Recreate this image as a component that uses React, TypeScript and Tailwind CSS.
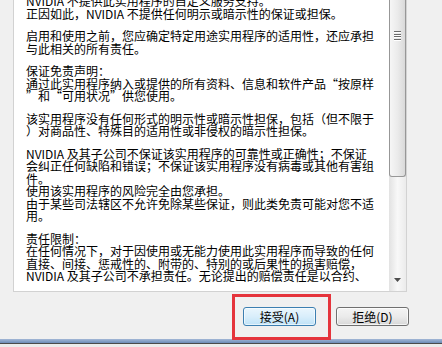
const paragraphs: string[][] = [
  [
    "NVIDIA 不提供此实用程序的自定义服务支持。",
    "正因如此，NVIDIA 不提供任何明示或暗示性的保证或担保。",
  ],
  [
    "启用和使用之前，您应确定特定用途实用程序的适用性，还应承担",
    "与此相关的所有责任。",
  ],
  [
    "保证免责声明：",
    "通过此实用程序纳入或提供的所有资料、信息和软件产品“按原样",
    "”和“可用状况”供您使用。",
  ],
  [
    "该实用程序没有任何形式的明示性或暗示性担保，包括（但不限于",
    "）对商品性、特殊目的适用性或非侵权的暗示性担保。",
  ],
  [
    "NVIDIA 及其子公司不保证该实用程序的可靠性或正确性；不保证",
    "会纠正任何缺陷和错误；不保证该实用程序没有病毒或其他有害组",
    "件。",
    "使用该实用程序的风险完全由您承担。",
    "由于某些司法辖区不允许免除某些保证，则此类免责可能对您不适",
    "用。",
  ],
  [
    "责任限制：",
    "在任何情况下，对于因使用或无能力使用此实用程序而导致的任何",
    "直接、间接、惩戒性的、附带的、特别的或后果性的损害赔偿，",
    "NVIDIA 及其子公司不承担责任。无论提出的赔偿责任是以合约、",
  ],
];

function Scrollbar() {
  return (
    <div className="flex w-[17px] flex-col bg-gradient-to-r from-[#e2e2e2] via-[#f8f8f8] to-[#ebebeb]">
      {/* thumb, scrolled so its top is out of view */}
      <div className="flex h-[177px] flex-col items-center gap-[0.5px] rounded-b-[3px] border-x border-b border-[#979797] bg-gradient-to-r from-[#f6f6f6] via-[#ebebeb] to-[#d9d9d9] pt-[31px]">
        {[0, 1, 2, 3].map((i) => (
          <div key={i} className="h-[2px] w-[7px] border-t border-[#6b6b6b] bg-white" />
        ))}
      </div>
      <div className="flex-1" />
      <div className="flex h-[17px] justify-center pt-[4px]">
        <svg width="7" height="4" viewBox="0 0 7 4">
          <path d="M0 0h7L3.5 4z" fill="#4d4d4d" />
        </svg>
      </div>
    </div>
  );
}

export default function App() {
  return (
    <div className="relative flex h-[347px] w-[442px] flex-col overflow-hidden bg-[#f0f0f0] font-['Noto_Sans_CJK_SC',sans-serif] text-black">
      <div className="ml-[13px] flex h-[292px] w-[394px] border-x border-b border-[#d2d2d2] bg-white">
        <div className="flex-1 overflow-hidden pl-[12px]">
          <div className="-mt-[5px] flex flex-col gap-[10px] text-[12px] leading-[12.5px]">
            {paragraphs.map((p, i) => (
              <p key={i}>
                {p.map((line, j) => (
                  <span key={j} className="block whitespace-nowrap">
                    {line}
                  </span>
                ))}
              </p>
            ))}
          </div>
        </div>
        <Scrollbar />
      </div>

      <div className="mt-[15px] flex justify-end gap-[20px] pr-[33px]">
        <button className="flex h-[19px] w-[73px] items-center justify-center rounded-[3px] border border-[#3c7fb1] bg-gradient-to-b from-[#eaf6fd] via-[#d9eefb] to-[#bfe2f7] text-[12px] leading-none shadow-[inset_0_0_0_1px_rgba(255,255,255,0.6)]">
          接受(A)
        </button>
        <button className="flex h-[19px] w-[73px] items-center justify-center rounded-[3px] border border-[#707070] bg-gradient-to-b from-[#f4f4f4] via-[#ebebeb] to-[#d8d8d8] text-[12px] leading-none shadow-[inset_0_0_0_1px_rgba(255,255,255,0.7)]">
          拒绝(D)
        </button>
      </div>

      <div className="mt-auto h-[4px] bg-gradient-to-b from-[#a3b8d6] to-[#6c8bb6]" />
      <div className="h-[4px] border-t border-[#4a4a4a] bg-[#ebebeb]" />

      {/* red highlight annotation */}
      <div className="pointer-events-none absolute left-[232px] top-[294px] h-[46px] w-[99px] border-[3px] border-[#e5343c]" />
    </div>
  );
}
